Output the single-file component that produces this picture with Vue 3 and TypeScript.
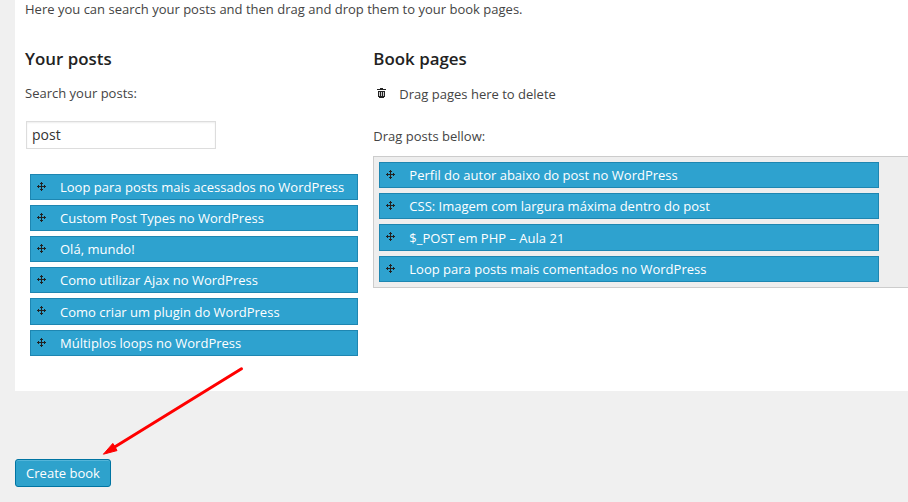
<script setup lang="ts">
import { ref } from 'vue'

const query = ref<string>('post')
const posts: string[] = [
  'Loop para posts mais acessados no WordPress',
  'Custom Post Types no WordPress',
  'Olá, mundo!',
  'Como utilizar Ajax no WordPress',
  'Como criar um plugin do WordPress',
  'Múltiplos loops no WordPress',
]
const pages: string[] = [
  'Perfil do autor abaixo do post no WordPress',
  'CSS: Imagem com largura máxima dentro do post',
  '$_POST em PHP – Aula 21',
  'Loop para posts mais comentados no WordPress',
]
</script>

<template>
  <main class="screen">
    <section class="panel">
      <p class="intro">Here you can search your posts and then drag and drop them to your book pages.</p>
      <div class="columns">
        <div class="col-posts">
          <h3>Your posts</h3>
          <label class="search-label" for="search">Search your posts:</label>
          <input id="search" v-model="query" class="search" type="text" />
          <ul class="list">
            <li v-for="p in posts" :key="p" class="item">
              <svg class="move" width="9" height="9" viewBox="0 0 9 9" shape-rendering="crispEdges">
                <path d="M4 0h1v9h-1zM0 4h9v1h-9zM3 1h3v1h-3zM3 7h3v1h-3zM1 3h1v3h-1zM7 3h1v3h-1z" />
              </svg>
              <span>{{ p }}</span>
            </li>
          </ul>
        </div>
        <div class="col-pages">
          <h3>Book pages</h3>
          <div class="trash">
            <svg width="9" height="10" viewBox="0 0 9 10" shape-rendering="crispEdges">
              <path d="M3 0h3v1h-3zM0 1h9v1h-9zM1 3h7v6h-7zM2 9h5v1h-5z" />
              <path class="slots" d="M2 4h1v4h-1zM4 4h1v4h-1zM6 4h1v4h-1z" />
            </svg>
            <span>Drag pages here to delete</span>
          </div>
          <p class="drop-label">Drag posts bellow:</p>
          <ul class="list dropzone">
            <li v-for="p in pages" :key="p" class="item">
              <svg class="move" width="9" height="9" viewBox="0 0 9 9" shape-rendering="crispEdges">
                <path d="M4 0h1v9h-1zM0 4h9v1h-9zM3 1h3v1h-3zM3 7h3v1h-3zM1 3h1v3h-1zM7 3h1v3h-1z" />
              </svg>
              <span>{{ p }}</span>
            </li>
          </ul>
        </div>
      </div>
    </section>
    <button class="create" type="button">Create book</button>
    <svg class="pointer" width="160" height="100" viewBox="90 360 160 100">
      <path class="shaft" d="M241.5 368.8L113 448" />
      <path class="head" d="M103.4 454.2L112.8 443.4L114.6 446L117 450.6Z" />
    </svg>
  </main>
</template>

<style>
body {
  margin: 0;
  background: #f0f0f0;
  overflow: hidden;
}
</style>

<style scoped>
.screen {
  position: relative;
  box-sizing: border-box;
  height: 502px;
  padding-left: 15px;
  overflow: hidden;
  background: #f0f0f0;
  color: #444;
  font: 13px/18px "Open Sans", sans-serif;
  letter-spacing: 0.008px;
}
.panel {
  box-sizing: border-box;
  height: 391px;
  padding-left: 10px;
  background: #fff;
}
.intro {
  margin: 0;
  height: 49px;
}
.columns {
  display: grid;
  grid-template-columns: 348.3px 545px;
}
h3 {
  margin: 0;
  color: #222;
  font-size: 16.9px;
  font-weight: 600;
  line-height: 20px;
}
.search-label {
  display: block;
  margin-top: 15px;
}
.search {
  display: block;
  box-sizing: border-box;
  width: 190px;
  height: 28px;
  margin: 19px 0 0 1px;
  padding: 2px 5px 4px;
  border: 1px solid #ddd;
  border-radius: 0;
  outline: none;
  background: #fff;
  box-shadow: inset 0 1px 2px rgba(0, 0, 0, 0.07);
  color: #333;
  font: 14px/20px "Open Sans", sans-serif;
}
.list {
  margin: 0;
  padding: 0;
  list-style: none;
}
.col-posts .list {
  width: 328px;
  margin: 24.66px 0 0 5px;
}
.item {
  display: flex;
  box-sizing: border-box;
  height: 26.2px;
  margin-bottom: 5px;
  padding: 3.2px 6px 2.8px;
  border: 1px solid #1e86b1;
  background: #2ea2cf;
  color: #fff;
  line-height: 18.2px;
}
.move {
  flex: none;
  margin: 3.8px 14px 0 0;
  fill: #222;
}
.trash {
  display: flex;
  margin-top: 16px;
}
.trash svg {
  margin: 3px 13px 0 4px;
  fill: #222;
}
.trash .slots {
  fill: #ccc;
}
.drop-label {
  margin: 24px 0 11px;
}
.dropzone {
  box-sizing: border-box;
  height: 132px;
  padding: 5px;
  border: 1px solid #ccc;
  background: #eee;
}
.dropzone .item {
  width: 500px;
}
.create {
  display: block;
  box-sizing: border-box;
  width: 96px;
  height: 28px;
  margin-top: 68px;
  padding: 0;
  border: 1px solid #0074a2;
  border-radius: 3px;
  background: #2ea2cc;
  box-shadow: inset 0 1px 0 rgba(120, 200, 230, 0.5);
  color: #fff;
  font: 13px/26px "Open Sans", sans-serif;
}
.pointer {
  position: absolute;
  left: 90px;
  top: 360px;
}
.shaft {
  stroke: #f00;
  stroke-width: 3;
  stroke-linecap: round;
}
.head {
  fill: #f00;
  stroke: #f00;
  stroke-width: 1;
}
</style>
